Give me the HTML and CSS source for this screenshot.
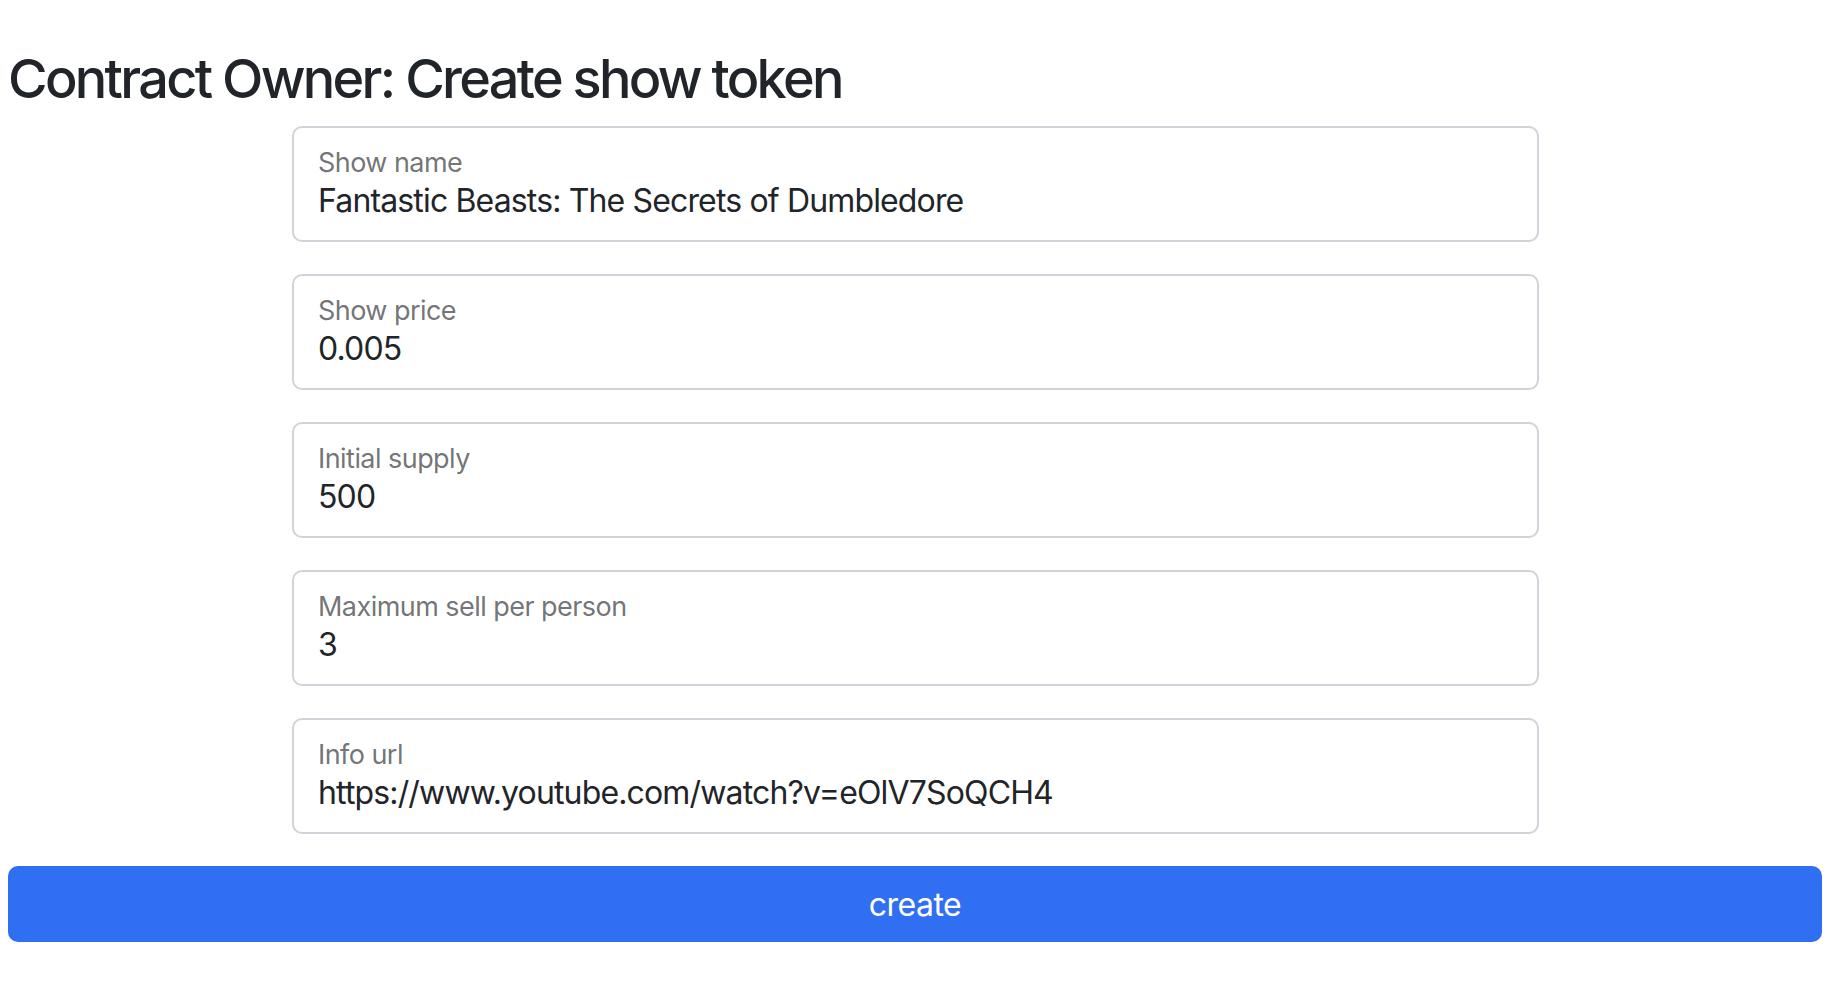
FILE: index.html
```html
<!DOCTYPE html>
<html lang="en">
<head>
<meta charset="utf-8">
<title>Create show token</title>
<link rel="stylesheet" href="styles.css">
</head>
<body>
  <h2 class="title">Contract Owner: Create show token</h2>
  <form class="token-form">
    <div class="field">
      <span class="field-label">Show name</span>
      <span class="field-value">Fantastic Beasts: The Secrets of Dumbledore</span>
    </div>
    <div class="field">
      <span class="field-label">Show price</span>
      <span class="field-value">0.005</span>
    </div>
    <div class="field">
      <span class="field-label">Initial supply</span>
      <span class="field-value">500</span>
    </div>
    <div class="field">
      <span class="field-label">Maximum sell per person</span>
      <span class="field-value">3</span>
    </div>
    <div class="field">
      <span class="field-label">Info url</span>
      <span class="field-value">https://www.youtube.com/watch?v=eOlV7SoQCH4</span>
    </div>
  </form>
  <button class="btn-create" type="button">create</button>
</body>
</html>
```
FILE: styles.css
```css
html, body {
  background: #ffffff;
}
body {
  margin: 8px;
  font-family: Inter, "Liberation Sans", sans-serif;
  color: #212529;
}
.title {
  margin: 39px 0 14px 0;
  font-size: 54px;
  font-weight: 500;
  line-height: 1.2;
  letter-spacing: -2.7px;
  color: #212529;
}
.token-form {
  width: 1247px;
  margin: 0 0 0 284px;
}
.field {
  box-sizing: border-box;
  height: 116px;
  border: 2px solid #ced4da;
  border-radius: 10px;
  padding: 19px 24px 0 24px;
  margin-bottom: 32px;
  display: flex;
  flex-direction: column;
}
.field-label {
  font-size: 27px;
  line-height: 1.2;
  letter-spacing: -0.55px;
  color: rgba(33, 37, 41, 0.65);
  margin-bottom: 3px;
}
.field-value {
  font-size: 32px;
  line-height: 1.2;
  letter-spacing: -0.85px;
  color: #212529;
}
.btn-create {
  display: block;
  width: 1814px;
  height: 76px;
  border: none;
  border-radius: 10px;
  background: #306ff2;
  color: #ffffff;
  font-family: Inter, "Liberation Sans", sans-serif;
  font-size: 32px;
  line-height: 1.5;
  letter-spacing: -0.5px;
  padding: 3px 0 0 0;
}
```
